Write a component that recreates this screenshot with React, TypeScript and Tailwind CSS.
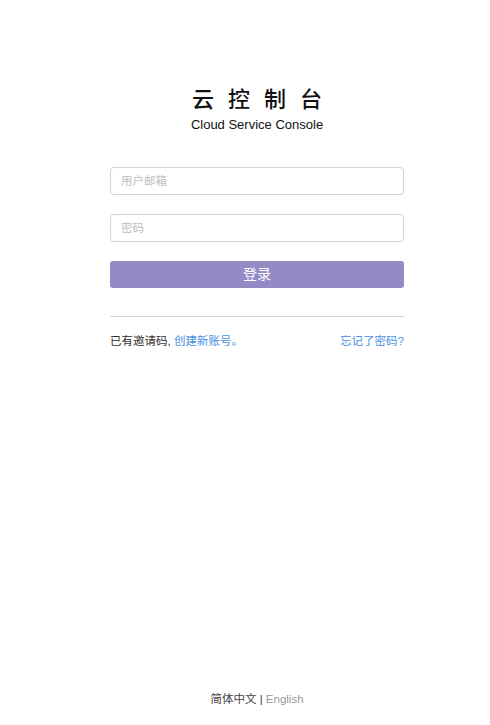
export default function App() {
  return (
    <div
      className="min-h-screen flex flex-col bg-white pl-6 text-[#333]"
      style={{ fontFamily: '"Liberation Sans", "Noto Sans CJK SC", sans-serif' }}
    >
      <main className="flex-1 flex flex-col items-center pt-[86px]">
        {/* Header */}
        <h1 className="flex gap-[14px] text-[22px] leading-[28px] font-medium text-[#111]">
          <span>云</span>
          <span>控</span>
          <span>制</span>
          <span>台</span>
        </h1>
        <p className="mt-[3px] text-[13px] leading-[16px] text-[#111]">Cloud Service Console</p>

        {/* Form */}
        <form className="mt-[34px] w-[294px] flex flex-col">
          <input
            type="email"
            placeholder="用户邮箱"
            className="h-[28px] w-full rounded-[4px] border border-[#d4d4d4] px-[10px] text-[11.5px] placeholder:text-[#bdbdbd] outline-none"
          />
          <input
            type="password"
            placeholder="密码"
            className="mt-[19px] h-[28px] w-full rounded-[4px] border border-[#d4d4d4] px-[10px] text-[11.5px] placeholder:text-[#bdbdbd] outline-none"
          />
          <button
            type="button"
            className="mt-[19px] h-[27px] w-full rounded-[3px] bg-[#948ac5] text-[14px] text-white"
          >
            登录
          </button>
        </form>

        <div className="mt-[28px] w-[294px] border-t border-[#d6d6d6]" />

        <div className="mt-[16px] w-[294px] flex justify-between text-[11.5px] leading-[16px]">
          <span>
            已有邀请码, <a className="text-[#4a8fe0]">创建新账号。</a>
          </span>
          <a className="text-[#4a8fe0]">忘记了密码?</a>
        </div>
      </main>

      {/* Footer */}
      <footer className="pb-[18px] text-center text-[11.5px] leading-[16px] text-[#444]">
        简体中文 <span className="text-[#333]">|</span> <span className="text-[#999]">English</span>
      </footer>
    </div>
  );
}
